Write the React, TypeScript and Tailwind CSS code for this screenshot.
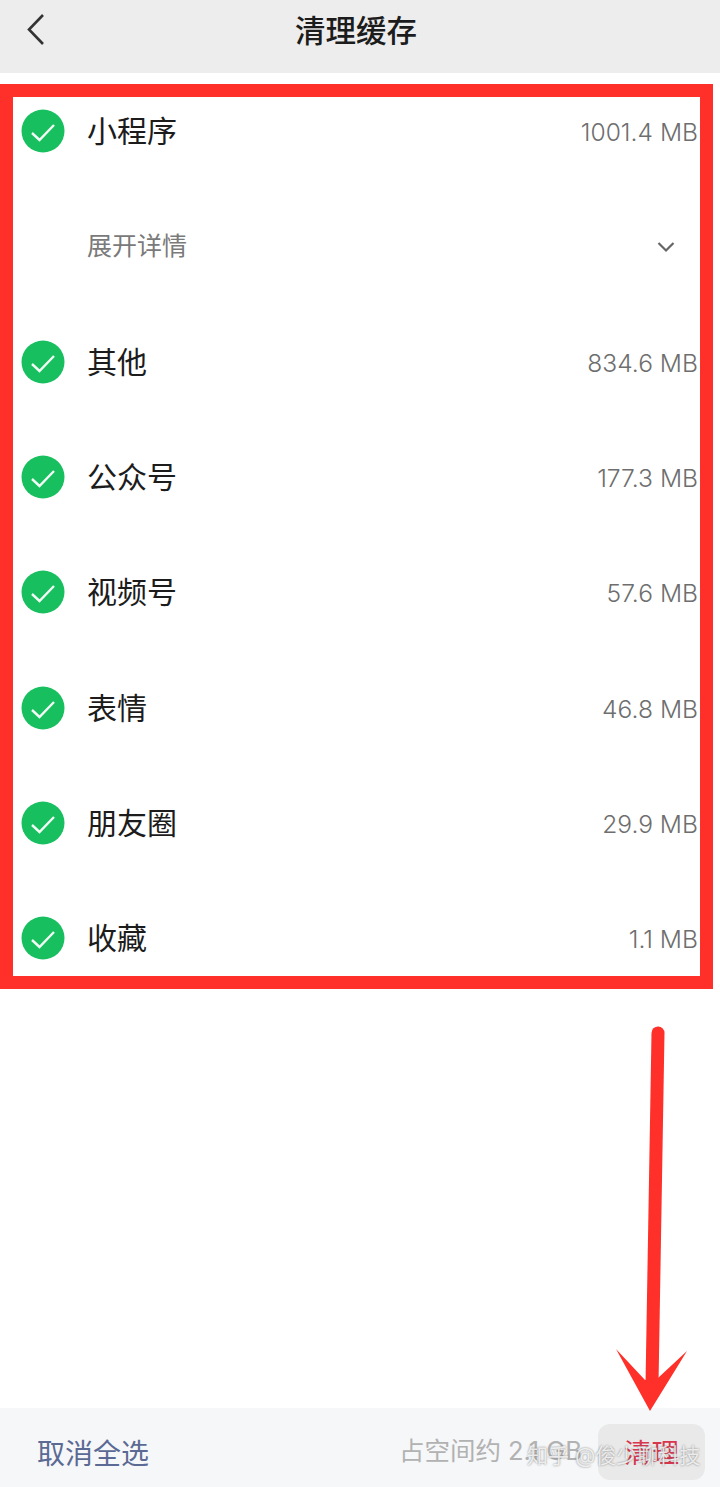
const FONT = "font-['Inter','Noto_Sans_CJK_SC',sans-serif]";

const rows = [
  { name: "其他", size: "834.6 MB" },
  { name: "公众号", size: "177.3 MB" },
  { name: "视频号", size: "57.6 MB" },
  { name: "表情", size: "46.8 MB" },
  { name: "朋友圈", size: "29.9 MB" },
];

function CheckCircle() {
  return (
    <svg width="44" height="44" viewBox="0 0 44 44" className="-mt-[2px] shrink-0">
      <circle cx="22" cy="22" r="21.5" fill="#17bf5f" />
      <path d="M11 24l7.5 7L33 16" fill="none" stroke="#f2fbf5" strokeWidth="2.4" />
    </svg>
  );
}

function Row({ name, size, className }: { name: string; size: string; className: string }) {
  return (
    <div className={`flex items-center pl-[8px] pr-[2px] ${className}`}>
      <CheckCircle />
      <span className="-mt-[2px] ml-[22px] text-[30px] leading-[40px] text-[#1c1c1c]">{name}</span>
      <span className="ml-auto text-[24.600px] font-light leading-[32px] text-[#6e6e6e]">{size}</span>
    </div>
  );
}

export default function App() {
  return (
    <div className={`relative flex h-[1487px] w-[720px] flex-col overflow-hidden bg-white ${FONT}`}>
      {/* Header */}
      <header className="relative flex h-[73px] shrink-0 items-center justify-center bg-[#ededed] pb-[11px] pr-[8px]">
        <svg width="24" height="36" viewBox="0 0 24 36" className="absolute left-[24px] top-[12px]">
          <path d="M19 3L5 17.5 19 32" fill="none" stroke="#333" strokeWidth="2.6" />
        </svg>
        <h1 className="text-[30.500px] font-medium leading-[40px] text-[#1c1c1c]">清理缓存</h1>
      </header>

      {/* Red highlighted list */}
      <div className="mt-[11px] h-[905px] w-[713px] shrink-0 border-[13px] border-[#fe3029]">
        <Row name="小程序" size="1001.4 MB" className="h-[68px] pt-[2px]" />
        <div className="mt-[24px] flex h-[115px] items-center pl-[74px] pr-[25px]">
          <span className="-mt-[2px] text-[25px] leading-[32px] text-[#7a7a7a]">展开详情</span>
          <svg width="18" height="12" viewBox="0 0 18 12" className="ml-auto">
            <path d="M1.5 2l7.5 7.5L16.500 2" fill="none" stroke="#666" strokeWidth="2.2" />
          </svg>
        </div>
        {rows.map((r) => (
          <Row key={r.name} name={r.name} size={r.size} className="h-[115.4px] pt-[2px]" />
        ))}
        <Row name="收藏" size="1.1 MB" className="h-[95px] pt-[21px]" />
      </div>

      <div className="flex-1" />

      {/* Bottom bar */}
      <footer className="flex h-[79px] shrink-0 items-center bg-[#f6f7f8] pl-[37px] pr-[15px] pt-[9px]">
        <span className="pt-[4px] text-[28px] leading-[36px] text-[#5a6a94]">取消全选</span>
        <span className="-mt-[2px] ml-auto text-[25.500px] leading-[32px] text-[#b2b2b2]">占空间约 2.1 GB</span>
        <div className="ml-[16px] flex h-[56px] w-[107px] items-center justify-center rounded-[12px] bg-[#e9e9e9]">
          <span className="pt-[2px] text-[27.500px] leading-[36px] text-[#d8364e]">清理</span>
        </div>
      </footer>

      {/* Watermark */}
      <span className="absolute left-[527px] top-[1441px] whitespace-nowrap text-[21px] leading-[30px] text-white/80 [text-shadow:0_0_2px_rgba(90,90,90,0.8)]">
        知乎 @俊少聊科技
      </span>

      {/* Red arrow annotation */}
      <svg width="720" height="1487" viewBox="0 0 720 1487" className="pointer-events-none absolute left-0 top-0">
        <path d="M658 1033L652 1385" fill="none" stroke="#fe3029" strokeWidth="13" strokeLinecap="round" />
        <path d="M616 1349L645 1380 658 1378 687 1351 650 1411z" fill="#fe3029" />
      </svg>
    </div>
  );
}
